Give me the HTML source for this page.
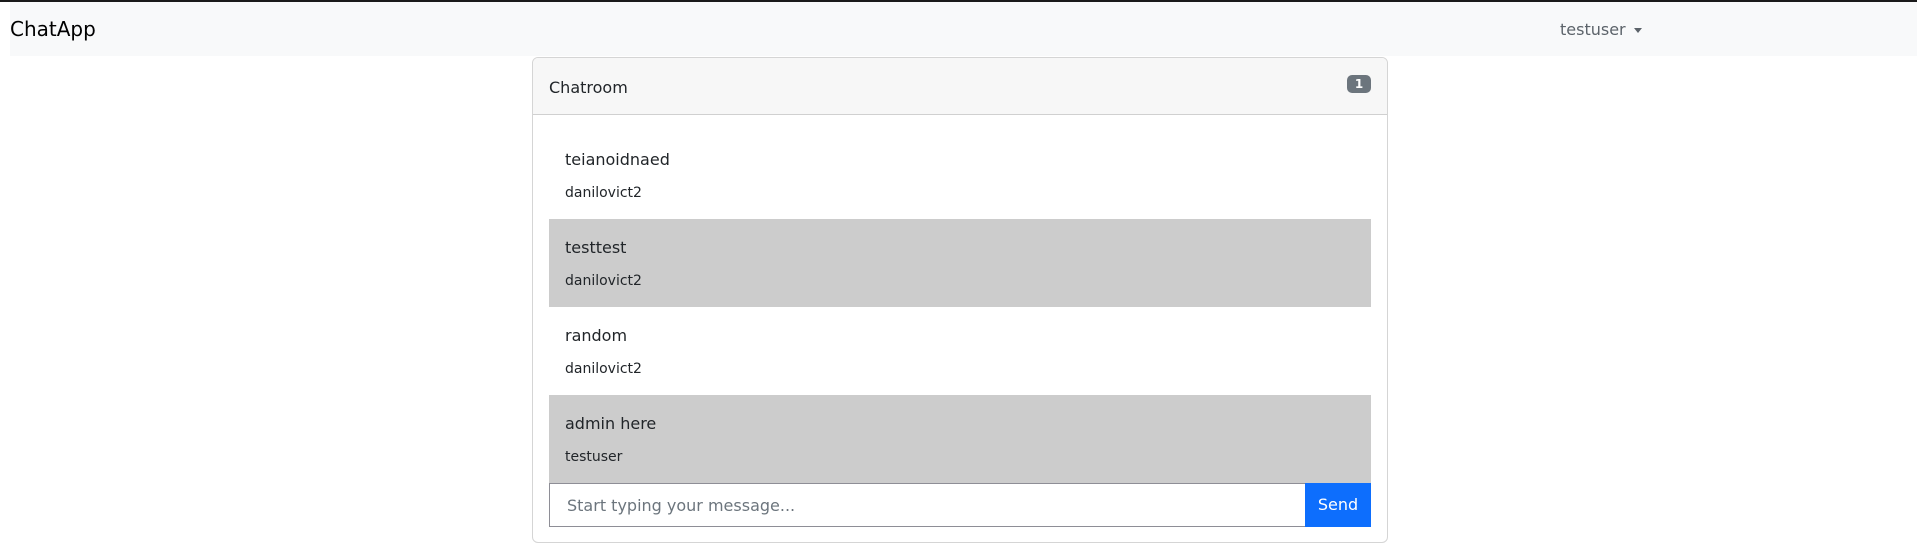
<!DOCTYPE html>
<html><head><meta charset="utf-8"><style>
*{box-sizing:border-box;margin:0;padding:0}
html,body{width:1917px;height:546px;overflow:hidden;background:#fff;font-family:"DejaVu Sans","Liberation Sans",sans-serif;color:#212529}
.topline{position:absolute;left:0;top:0;width:1917px;height:2px;background:#1a1a1a}
.nav{position:absolute;left:10px;top:2px;width:1907px;height:54px;background:#f8f9fa}
.brand{position:absolute;left:0;top:14px;font-size:20px;line-height:26px;color:#000}
.user{position:absolute;left:1550px;top:16px;font-size:16px;line-height:24px;color:#5c636a}
.caret{position:absolute;left:1624px;top:26px;width:0;height:0;border-left:4px solid transparent;border-right:4px solid transparent;border-top:5px solid #5c636a}
.card{position:absolute;left:532px;top:57px;width:856px;height:486px;border:1px solid #d5d5d5;border-radius:6px;overflow:hidden}
.hdr{position:absolute;left:0;top:0;width:854px;height:57px;background:#f7f7f7;border-bottom:1px solid #d0d0d0}
.hdr span{position:absolute;left:16px;top:18px;font-size:16px;line-height:24px}
.badge{position:absolute;left:814px;top:17px;width:24px;height:18px;border-radius:5px;background:#6c757d;color:#fff;font-size:12px;font-weight:bold;line-height:18px;text-align:center}
.row{position:absolute;left:16px;width:822px;height:88px}
.row.g{background:#cccccc}
.m{position:absolute;left:16px;top:17px;font-size:16px;line-height:24px}
.u{position:absolute;left:16px;top:52px;font-size:14px;line-height:21px}
.inp{position:absolute;left:16px;top:425px;width:757px;height:44px;border:1px solid #8e8e96;background:#fff}
.inp span{position:absolute;left:17px;top:10px;font-size:16px;line-height:24px;color:#6c757d}
.btn{position:absolute;left:772px;top:425px;width:66px;height:44px;background:#0d6efd;color:#fff;font-size:16px;line-height:44px;text-align:center}
</style></head><body>
<div class="topline"></div>
<div class="nav"><div class="brand">ChatApp</div><div class="user">testuser</div><div class="caret"></div></div>
<div class="card">
<div class="hdr"><span>Chatroom</span><div class="badge">1</div></div>
<div class="row" style="top:73px"><div class="m">teianoidnaed</div><div class="u">danilovict2</div></div>
<div class="row g" style="top:161px"><div class="m">testtest</div><div class="u">danilovict2</div></div>
<div class="row" style="top:249px"><div class="m">random</div><div class="u">danilovict2</div></div>
<div class="row g" style="top:337px"><div class="m">admin here</div><div class="u">testuser</div></div>
<div class="inp"><span>Start typing your message...</span></div>
<div class="btn">Send</div>
</div>
</body></html>
